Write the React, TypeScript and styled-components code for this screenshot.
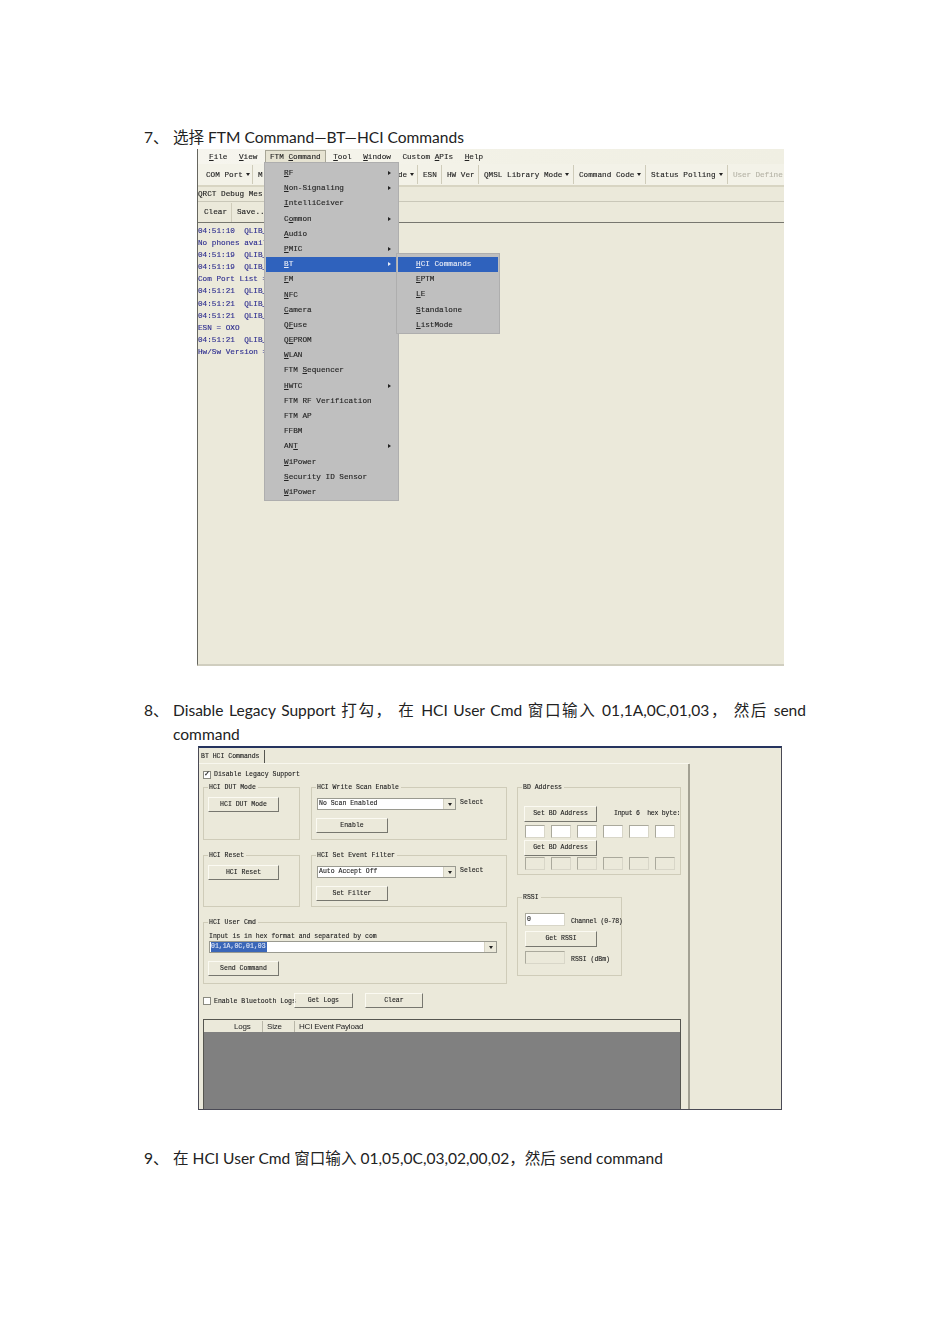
import React from "react";
import styled, { createGlobalStyle } from "styled-components";

const Global = createGlobalStyle`
  html, body { margin: 0; padding: 0; background: #fff; }
`;

const Page = styled.div`
  width: 950px;
  height: 1344px;
  box-sizing: border-box;
  padding: 125px 144px 0;
  overflow: hidden;
  color: #222;
  font-family: "Lato", "Noto Sans CJK SC", sans-serif;
  font-size: 15.56px;
  line-height: 24px;
`;

const Step = styled.div`
  display: flex;
`;
const Marker = styled.span`
  flex: 0 0 29px;
  white-space: pre;
`;
const StepText = styled.div`
  flex: 1;
  min-width: 0;
`;
const JustifiedLine = styled.p`
  margin: 0;
  text-align: justify;
  text-align-last: justify;
`;

const Ui = styled.div`
  font-family: "Liberation Mono", "DejaVu Sans Mono", monospace;
  font-size: 7.7px;
  line-height: 10px;
  color: #222;
  white-space: pre;
  filter: blur(0.35px);
  -webkit-text-stroke: 0.12px currentColor;
`;

/* ---------- screenshot 1: main window ---------- */
const MainWindow = styled(Ui)`
  position: relative;
  width: 587px;
  height: 517px;
  margin: 0 0 32px 53px;
  box-sizing: border-box;
  border-left: 1px solid #66665f;
  border-bottom: 2px solid #d0cebf;
  background: #ebe9da;
  display: flex;
  flex-direction: column;
  overflow: hidden;
`;
const MenuBar = styled.div`
  height: 15px;
  flex: none;
  display: flex;
  align-items: center;
  gap: 11.5px;
  padding-left: 11px;
  background: linear-gradient(90deg, #f6f5ee, #f2f1e6 55%, #f0efe3);
`;
const MenuTitle = styled.span`
  margin: 0 -4px;
  padding: 1px 4px;
  height: 11px;
  background: #e6e3d2;
  border: 1px solid #a8a696;
  border-bottom: 0;
`;
const Toolbar = styled.div`
  height: 21px;
  flex: none;
  display: flex;
  align-items: center;
  background: #f3f2e8;
  border-bottom: 2px solid #d8d5c3;
`;
const Tool = styled.span<{ $w: number; $off?: boolean; $pl?: number }>`
  flex: 0 0 ${(p) => p.$w}px;
  box-sizing: border-box;
  height: 19px;
  display: flex;
  align-items: center;
  gap: 3px;
  padding-left: ${(p) => p.$pl ?? 5}px;
  border-right: 1px solid #cfccba;
  color: ${(p) => (p.$off ? "#b5b3a6" : "#222")};
  letter-spacing: ${(p) => (p.$off ? "-0.1px" : "0")};
  &:last-child { border-right: 0; }
`;
const Caret = styled.i`
  width: 0;
  height: 0;
  border: 2px solid transparent;
  border-top: 3px solid #222;
  border-bottom: 0;
`;
const DebugTitle = styled.div`
  height: 14px;
  flex: none;
  display: flex;
  align-items: center;
  border-bottom: 1px solid #c9c7b8;
`;
const DebugBar = styled.div`
  height: 20px;
  flex: none;
  display: flex;
  align-items: center;
  border-bottom: 1px solid #77776f;
`;
const LogPane = styled.div`
  flex: 1;
  padding-top: 2px;
  color: #2b2b8f;
  line-height: 12.1px;
`;

const Menu = styled.div<{ $x: number; $y: number; $w: number; $pad: number }>`
  position: absolute;
  left: ${(p) => p.$x}px;
  top: ${(p) => p.$y}px;
  width: ${(p) => p.$w}px;
  box-sizing: border-box;
  padding: 3px 1px 0;
  background: #bfbfbf;
  border: 1px solid #aeaeae;
  --pad: ${(p) => p.$pad}px;
`;
const MenuRow = styled.div<{ $on?: boolean }>`
  position: relative;
  height: 15.2px;
  line-height: 15.2px;
  padding-left: var(--pad);
  background: ${(p) => (p.$on ? "#2f62bd" : "transparent")};
  color: ${(p) => (p.$on ? "#e8ecf6" : "#222")};
`;
const Arrow = styled.i`
  position: absolute;
  right: 6px;
  top: 5px;
  width: 0;
  height: 0;
  border: 2.5px solid transparent;
  border-left: 3.5px solid currentColor;
  border-right: 0;
`;

/* ---------- screenshot 2: HCI dialog ---------- */
const Dialog = styled(Ui)`
  width: 584px;
  height: 364px;
  margin: 0 0 36px 54px;
  box-sizing: border-box;
  border: 1px solid #4a4a55;
  border-top: 2px solid #26345f;
  background: #ebe9da;
  font-size: 6.5px;
  overflow: hidden;
`;
const TabStrip = styled.div`
  height: 16px;
  width: 490px;
  box-sizing: border-box;
  border-bottom: 1px solid #f8f7ee;
  padding: 2px 0 0 2px;
  display: flex;
`;
const Tab = styled.div`
  height: 13px;
  line-height: 14px;
  padding-right: 4px;
  border-right: 1px solid #55554f;
`;
const Panel = styled.div`
  width: 491px;
  height: 345px;
  box-sizing: border-box;
  border-right: 2px solid #a3a193;
  padding: 6px 0 0 4px;
`;
const Check = styled.span`
  flex: none;
  width: 8px;
  height: 8px;
  box-sizing: border-box;
  background: #fff;
  border: 1px solid #8a8a80;
  display: inline-flex;
  align-items: center;
  justify-content: center;
  font: 700 7px/1 "DejaVu Sans", sans-serif;
  color: #222;
`;
const CheckRow = styled.div<{ $gap: number }>`
  display: flex;
  align-items: center;
  gap: ${(p) => p.$gap}px;
`;
const Columns = styled.div`
  display: flex;
  gap: 10px;
  height: 207px;
  margin-top: 8px;
`;
const LeftCol = styled.div`
  width: 304px;
  display: flex;
  flex-direction: column;
  gap: 15px;
`;
const Row = styled.div`
  display: flex;
  gap: 11px;
`;
const RightCol = styled.div`
  width: 164px;
  display: flex;
  flex-direction: column;
  gap: 22px;
  align-items: flex-start;
`;
const Group = styled.div<{ $w: number; $h: number }>`
  position: relative;
  width: ${(p) => p.$w}px;
  height: ${(p) => p.$h}px;
  box-sizing: border-box;
  border: 1px solid #cfccb9;
  padding: 9px 4px 0;
  display: flex;
  flex-direction: column;
  align-items: flex-start;
`;
const Legend = styled.span`
  position: absolute;
  left: 4px;
  top: -5px;
  padding: 0 2px 0 1px;
  background: #ebe9da;
`;
const Btn = styled.div<{ $w: number; $h?: number; $mt?: number; $ml?: number }>`
  flex: none;
  width: ${(p) => p.$w}px;
  height: ${(p) => p.$h ?? 15}px;
  margin-top: ${(p) => p.$mt ?? 0}px;
  margin-left: ${(p) => p.$ml ?? 0}px;
  box-sizing: border-box;
  border-right: 1px solid #77776f;
  border-bottom: 1px solid #77776f;
  border-top: 1px solid #fbfaf2;
  border-left: 1px solid #fbfaf2;
  display: flex;
  align-items: center;
  justify-content: center;
`;
const SelectRow = styled.div`
  display: flex;
  align-items: flex-start;
  gap: 4px;
  margin: 1px 0 0 1px;
`;
const Select = styled.div<{ $w: number; $ml?: number }>`
  width: ${(p) => p.$w}px;
  height: 12px;
  margin-left: ${(p) => p.$ml ?? 0}px;
  box-sizing: border-box;
  background: #fff;
  border: 1px solid #9a9a90;
  display: flex;
  align-items: center;
  justify-content: space-between;
  padding-left: 1px;
`;
const SelectBtn = styled.span`
  width: 11px;
  height: 10px;
  background: #ebe9da;
  border-left: 1px solid #d5d2c2;
  display: flex;
  align-items: center;
  justify-content: center;
`;
const Chosen = styled.span`
  background: #3a66b8;
  color: #dfe6f5;
  padding-right: 1px;
`;
const FieldRow = styled.div<{ $mt?: number; $ml?: number; $gap?: number }>`
  display: flex;
  align-items: center;
  gap: ${(p) => p.$gap ?? 6}px;
  margin-top: ${(p) => p.$mt ?? 0}px;
  margin-left: ${(p) => p.$ml ?? 0}px;
`;
const Field = styled.span<{ $w: number; $ro?: boolean }>`
  flex: none;
  width: ${(p) => p.$w}px;
  height: 13px;
  box-sizing: border-box;
  padding-left: 1px;
  line-height: 11px;
  background: ${(p) => (p.$ro ? "#ebe9da" : "#fff")};
  border: 1px solid #aaa99c;
  border-right-color: #d8d6c8;
  border-bottom-color: #d8d6c8;
`;
const SmallLabel = styled.span<{ $ml?: number; $mt?: number; $tight?: boolean }>`
  line-height: 9px;
  margin-left: ${(p) => p.$ml ?? 0}px;
  margin-top: ${(p) => p.$mt ?? 0}px;
  letter-spacing: ${(p) => (p.$tight ? "-0.22px" : "0")};
`;
const Table = styled.div`
  width: 478px;
  height: 91px;
  margin-top: 11px;
  box-sizing: border-box;
  border: 1px solid #55554f;
  border-bottom: 0;
  display: flex;
  flex-direction: column;
  font-family: "Liberation Sans", Arial, sans-serif;
  -webkit-text-stroke: 0;
`;
const TableHead = styled.div`
  height: 12px;
  flex: none;
  display: flex;
  align-items: center;
  font-size: 8px;
  letter-spacing: -0.2px;
`;
const Col = styled.span<{ $w: number }>`
  flex: 0 0 ${(p) => p.$w}px;
  box-sizing: border-box;
  padding-left: 4px;
  border-right: 1px solid #b9b7a8;
  line-height: 11px;
  &:last-child { border-right: 0; flex: 1; }
`;
const TableBody = styled.div`
  flex: 1;
  background: #808080;
`;

const logs = [
  "04:51:10  QLIB_",
  "No phones avail",
  "04:51:19  QLIB_",
  "04:51:19  QLIB_",
  "Com Port List =",
  "04:51:21  QLIB_",
  "04:51:21  QLIB_",
  "04:51:21  QLIB_",
  "ESN = OXO",
  "04:51:21  QLIB_",
  "Hw/Sw Version =",
];

const mainMenu: { pre?: string; u: string; post: string; sub?: boolean; on?: boolean }[] = [
  { u: "R", post: "F", sub: true },
  { u: "N", post: "on-Signaling", sub: true },
  { u: "I", post: "ntelliCeiver" },
  { pre: "C", u: "o", post: "mmon", sub: true },
  { u: "A", post: "udio" },
  { u: "P", post: "MIC", sub: true },
  { u: "B", post: "T", sub: true, on: true },
  { u: "F", post: "M" },
  { u: "N", post: "FC" },
  { u: "C", post: "amera" },
  { pre: "Q", u: "F", post: "use" },
  { pre: "Q", u: "E", post: "PROM" },
  { u: "W", post: "LAN" },
  { pre: "FTM ", u: "S", post: "equencer" },
  { u: "H", post: "WTC", sub: true },
  { pre: "FTM RF Verification", u: "", post: "" },
  { pre: "FTM AP", u: "", post: "" },
  { pre: "FFBM", u: "", post: "" },
  { pre: "AN", u: "T", post: "", sub: true },
  { u: "W", post: "iPower" },
  { u: "S", post: "ecurity ID Sensor" },
  { u: "W", post: "iPower" },
];

const subMenu = [
  { u: "H", post: "CI Commands", on: true },
  { u: "E", post: "PTM" },
  { u: "L", post: "E" },
  { u: "S", post: "tandalone" },
  { u: "L", post: "istMode" },
];

export default function App() {
  return (
    <Page>
      <Global />
      <Step>
        <Marker>7、</Marker>
        <StepText>选择 FTM Command—BT—HCI Commands</StepText>
      </Step>

      <MainWindow>
        <MenuBar>
          <span><u>F</u>ile</span>
          <span><u>V</u>iew</span>
          <MenuTitle>FTM <u>C</u>ommand</MenuTitle>
          <span><u>T</u>ool</span>
          <span><u>W</u>indow</span>
          <span>Custom <u>A</u>PIs</span>
          <span><u>H</u>elp</span>
        </MenuBar>
        <Toolbar>
          <Tool $w={55} $pl={8}>COM Port<Caret /></Tool>
          <Tool $w={140}>M</Tool>
          <Tool $w={25}>de<Caret /></Tool>
          <Tool $w={24}>ESN</Tool>
          <Tool $w={37}>HW Ver</Tool>
          <Tool $w={95}>QMSL Library Mode<Caret /></Tool>
          <Tool $w={72}>Command Code<Caret /></Tool>
          <Tool $w={82}>Status Polling<Caret /></Tool>
          <Tool $w={56} $off>User Define</Tool>
        </Toolbar>
        <DebugTitle>QRCT Debug Mes:</DebugTitle>
        <DebugBar>
          <Tool $w={34} $pl={6}>Clear</Tool>
          <Tool $w={60}>Save...</Tool>
        </DebugBar>
        <LogPane>
          {logs.map((l, i) => (
            <div key={i}>{l}</div>
          ))}
        </LogPane>

        <Menu $x={66} $y={13} $w={135} $pad={18}>
          {mainMenu.map((m, i) => (
            <MenuRow key={i} $on={m.on}>
              {m.pre}
              {m.u && <u>{m.u}</u>}
              {m.post}
              {m.sub && <Arrow />}
            </MenuRow>
          ))}
        </Menu>
        <Menu $x={198} $y={104} $w={104} $pad={18}>
          {subMenu.map((m, i) => (
            <MenuRow key={i} $on={m.on}>
              <u>{m.u}</u>
              {m.post}
            </MenuRow>
          ))}
        </Menu>
      </MainWindow>

      <Step>
        <Marker>8、</Marker>
        <StepText>
          <JustifiedLine>Disable Legacy Support 打勾， 在 HCI User Cmd 窗口输入 01,1A,0C,01,03， 然后 send</JustifiedLine>
          command
        </StepText>
      </Step>

      <Dialog>
        <TabStrip>
          <Tab>BT HCI Commands</Tab>
        </TabStrip>
        <Panel>
          <CheckRow $gap={3}>
            <Check>✓</Check>
            <SmallLabel>Disable Legacy Support</SmallLabel>
          </CheckRow>
          <Columns>
            <LeftCol>
              <Row>
                <Group $w={97} $h={53}>
                  <Legend>HCI DUT Mode</Legend>
                  <Btn $w={71}>HCI DUT Mode</Btn>
                </Group>
                <Group $w={196} $h={53}>
                  <Legend>HCI Write Scan Enable</Legend>
                  <SelectRow>
                    <Select $w={139}>No Scan Enabled<SelectBtn><Caret /></SelectBtn></Select>
                    Select
                  </SelectRow>
                  <Btn $w={72} $mt={8}>Enable</Btn>
                </Group>
              </Row>
              <Row>
                <Group $w={97} $h={52}>
                  <Legend>HCI Reset</Legend>
                  <Btn $w={71}>HCI Reset</Btn>
                </Group>
                <Group $w={196} $h={52}>
                  <Legend>HCI Set Event Filter</Legend>
                  <SelectRow>
                    <Select $w={139}>Auto Accept Off<SelectBtn><Caret /></SelectBtn></Select>
                    Select
                  </SelectRow>
                  <Btn $w={72} $mt={8}>Set Filter</Btn>
                </Group>
              </Row>
              <Group $w={304} $h={62}>
                <Legend>HCI User Cmd</Legend>
                <SmallLabel $ml={1}>Input is in hex format and separated by com</SmallLabel>
                <Select $w={288} $ml={1}><Chosen>01,1A,0C,01,03</Chosen><SelectBtn><Caret /></SelectBtn></Select>
                <Btn $w={71} $mt={8}>Send Command</Btn>
              </Group>
            </LeftCol>
            <RightCol>
              <Group $w={164} $h={88}>
                <Legend>BD Address</Legend>
                <FieldRow $mt={9} $gap={17} $ml={2}>
                  <Btn $w={73} $h={16}>Set BD Address</Btn>
                  <SmallLabel $tight $mt={-2}>Input 6  hex byte:</SmallLabel>
                </FieldRow>
                <FieldRow $mt={3} $ml={3}>
                  {[0, 1, 2, 3, 4, 5].map((i) => <Field key={i} $w={20} />)}
                </FieldRow>
                <Btn $w={73} $h={16} $mt={2} $ml={2}>Get BD Address</Btn>
                <FieldRow $mt={1} $ml={3}>
                  {[0, 1, 2, 3, 4, 5].map((i) => <Field key={i} $w={20} $ro />)}
                </FieldRow>
              </Group>
              <Group $w={105} $h={79}>
                <Legend>RSSI</Legend>
                <FieldRow $mt={6} $gap={6} $ml={3}>
                  <Field $w={40}>0</Field>
                  <SmallLabel $tight $mt={4}>Channel (0-78)</SmallLabel>
                </FieldRow>
                <Btn $w={72} $h={16} $mt={5} $ml={3}>Get RSSI</Btn>
                <FieldRow $mt={4} $gap={6} $ml={3}>
                  <Field $w={40} $ro />
                  <SmallLabel $mt={3}>RSSI (dBm)</SmallLabel>
                </FieldRow>
              </Group>
            </RightCol>
          </Columns>
          <CheckRow $gap={3}>
            <Check />
            <SmallLabel>Enable Bluetooth Logs</SmallLabel>
            <Btn $w={59} $mt={-1} $ml={-5}>Get Logs</Btn>
            <Btn $w={58} $ml={9} $mt={-1}>Clear</Btn>
          </CheckRow>
          <Table>
            <TableHead>
              <Col $w={26} />
              <Col $w={33}>Logs</Col>
              <Col $w={32}>Size</Col>
              <Col $w={100}>HCI Event Payload</Col>
            </TableHead>
            <TableBody />
          </Table>
        </Panel>
      </Dialog>

      <Step>
        <Marker>9、</Marker>
        <StepText>在 HCI User Cmd 窗口输入 01,05,0C,03,02,00,02，然后 send command</StepText>
      </Step>
    </Page>
  );
}
